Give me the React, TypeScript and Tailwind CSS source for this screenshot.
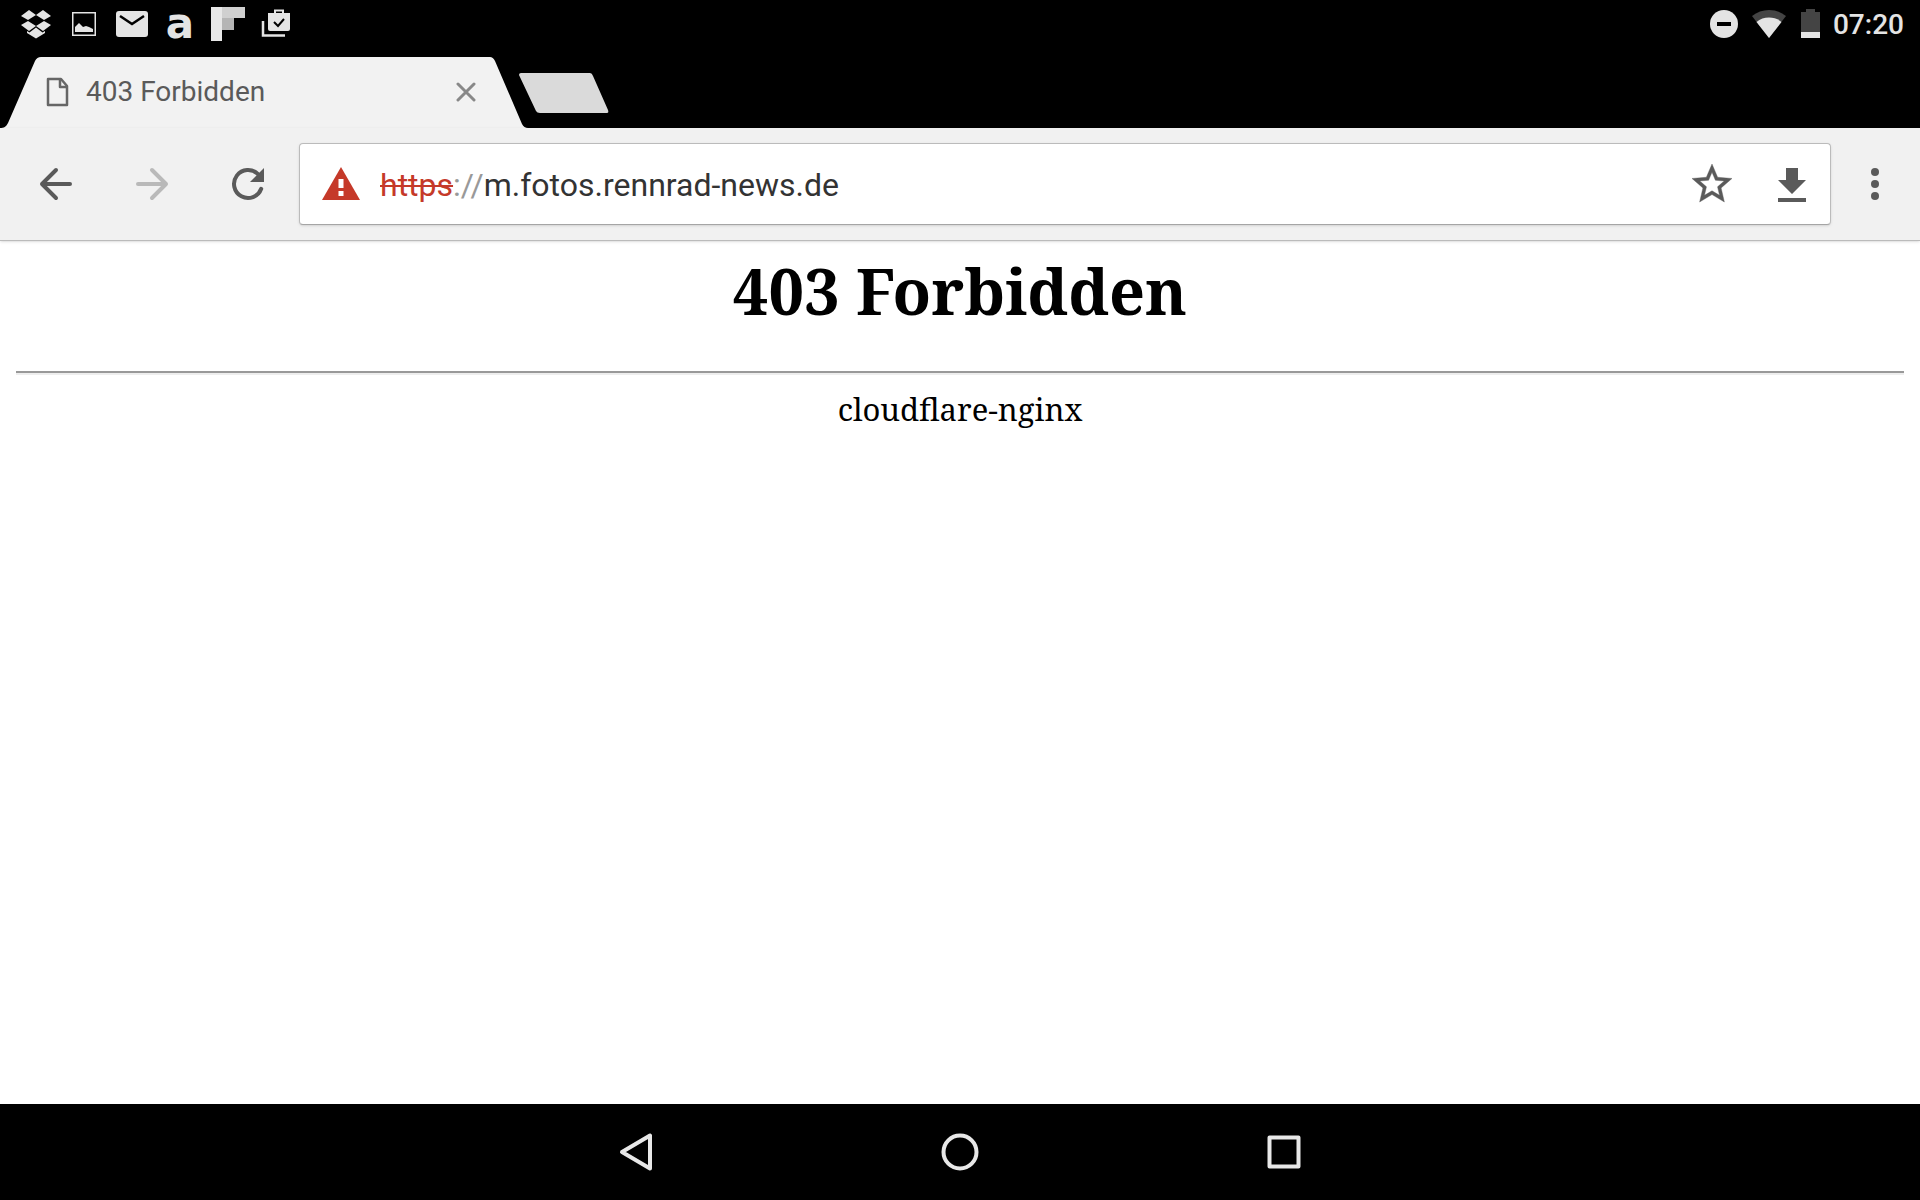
import type { ReactNode } from 'react'

interface IconButtonProps {
  label: string
  className?: string
  disabled?: boolean
  children: ReactNode
}

function IconButton({ label, className = '', disabled, children }: IconButtonProps) {
  return (
    <button
      type="button"
      aria-label={label}
      disabled={disabled}
      className={`flex shrink-0 items-center justify-center ${className}`}
    >
      {children}
    </button>
  )
}

function Notifications() {
  return (
    <div className="flex items-center text-[#e4e4e4]">
      <span className="flex w-12 justify-center">
        <svg className="size-12" viewBox="0 0 48 48" fill="currentColor" aria-hidden="true">
          <path d="M17 10l7 5-8 5-7-4zM31 10l8 6-7 4-8-5zM9 25l7-4 8 5-7 5zM39 25l-7-4-8 5 7 5z" />
          <path d="M24 27.500l-6.500 5-2.500-1.500v2l9 5.500 9-5.500v-2l-2.500 1.500z" />
        </svg>
      </span>
      <span className="flex w-12 justify-center">
        <svg className="size-12" viewBox="0 0 48 48" aria-hidden="true">
          <rect x="12.750" y="12.750" width="22.500" height="22.500" fill="none" stroke="currentColor" strokeWidth="1.500" />
          <path d="M15 32v-5l4-4 4 4 3-1 3 1 4 2v3z" fill="currentColor" />
        </svg>
      </span>
      <span className="flex w-12 justify-center">
        <svg className="size-12" viewBox="0 0 48 48" aria-hidden="true">
          <rect x="8" y="11" width="32" height="26" rx="3" fill="currentColor" />
          <path d="M12 16l12 8 12-8" fill="none" stroke="#000" strokeWidth="2.500" />
        </svg>
      </span>
      <span className="flex h-12 w-12 items-center justify-center font-['DejaVu_Sans'] text-[42px] leading-9 font-bold">
        a
      </span>
      <span className="flex w-12 justify-center">
        <svg className="size-12" viewBox="0 0 48 48" aria-hidden="true">
          <path d="M7 7h11v34H7z" fill="#e8e8e8" />
          <path d="M18 7h23v11H18z" fill="#d0d0d0" />
          <path d="M18 18h12v12H18z" fill="#b5b5b5" />
        </svg>
      </span>
      <span className="flex w-12 justify-center">
        <svg className="size-12" viewBox="0 0 48 48" aria-hidden="true">
          <path d="M11 21v14.500h22" fill="none" stroke="currentColor" strokeWidth="2.500" />
          <path d="M16 13h22v16a2 2 0 0 1-2 2H18a2 2 0 0 1-2-2z" fill="currentColor" />
          <path d="M23 13v-2.500h8V13" fill="none" stroke="currentColor" strokeWidth="2" />
          <path d="M22 22l4 4 6-7" fill="none" stroke="#000" strokeWidth="2" />
        </svg>
      </span>
    </div>
  )
}

function StatusBar() {
  return (
    <header className="flex h-12 items-center justify-between pr-4 pl-3">
      <Notifications />
      <div className="flex items-center text-[#e4e4e4]">
        <svg className="h-12 w-[120px]" viewBox="0 0 120 48" aria-hidden="true">
          <circle cx="15" cy="24" r="14" fill="currentColor" />
          <path d="M8 24h14" stroke="#000" strokeWidth="4" />
          <path d="M43 16a27 27 0 0 1 34 0L60 38z" fill="#444" />
          <path d="M47.500 22a20 20 0 0 1 25 0L60 38z" fill="currentColor" />
          <path d="M92 12h5V9h9v3h5v26H92z" fill="#444" />
          <path d="M92 32h19v6H92z" fill="currentColor" />
        </svg>
        <time className="ml-1 pt-0.5 text-[28px] leading-8 font-medium">07:20</time>
      </div>
    </header>
  )
}

function TabStrip() {
  return (
    <div className="flex h-20 items-end">
      <div className="relative h-[71px] w-[532px] shrink-0">
        <svg className="absolute inset-0 size-full" viewBox="0 0 532 71" aria-hidden="true">
          <path d="M0 71C4 71 6 70 8 66L35 4Q37 0 41 0H490Q493 0 495 4L522 67Q524 71 528 71Z" fill="#f2f2f2" />
        </svg>
        <div className="relative flex h-full items-center pr-14 pb-0.5 pl-[46px]">
          <svg className="h-[30px] w-6 shrink-0" viewBox="0 0 24 30" fill="none" stroke="#666" strokeWidth="2.500" strokeLinejoin="round" aria-hidden="true">
            <path d="M2 2h13l6 7v19H2z" />
            <path d="M14 2v8h7" />
          </svg>
          <span className="ml-4 flex-1 truncate text-[28px] leading-8 text-[#5a5a5a]">403 Forbidden</span>
          <IconButton label="Close tab">
            <svg className="size-5" viewBox="0 0 20 20" fill="none" stroke="#888" strokeWidth="3" strokeLinecap="round" aria-hidden="true">
              <path d="M2 2l16 16M18 2L2 18" />
            </svg>
          </IconButton>
        </div>
      </div>
      <IconButton label="New tab" className="-ml-4 h-[71px]">
        <svg className="h-10 w-24" viewBox="0 0 96 40" aria-hidden="true">
          <path d="M5 0H74Q76 0 77 3L92 37Q93 40 91 40H24Q21 40 20 38L3 2Q3 0 5 0Z" fill="#dadada" />
        </svg>
      </IconButton>
    </div>
  )
}

function AddressBar() {
  return (
    <div className="ml-[3px] flex h-[82px] min-w-0 flex-1 items-center rounded-sm border border-[#bbb] border-b-[#a5a5a5] bg-white pl-[22px] shadow-sm">
      <svg className="h-[34px] w-[38px] shrink-0" viewBox="0 0 38 34" aria-hidden="true">
        <path d="M19 0l19 33H0z" fill="#c53929" />
        <path d="M16.500 12h5v9h-5zM16.500 24h5v5h-5z" fill="#fff" />
      </svg>
      <a href="https://m.fotos.rennrad-news.de" className="ml-5 flex-1 truncate pt-0.5 text-[32px] leading-10 text-[#333]">
        <span className="text-[#c53929] line-through decoration-2">https</span>
        <span className="text-[#999]">://</span>
        m.fotos.rennrad-news.de
      </a>
      <IconButton label="Bookmark this page" className="w-[84px]">
        <svg className="size-12" viewBox="0 0 24 24" fill="#5a5a5a" stroke="#5a5a5a" strokeWidth="0.200" aria-hidden="true">
          <path d="M22 9.240l-7.190-.62L12 2 9.190 8.630 2 9.240l5.460 4.730L5.820 21 12 17.270 18.180 21l-1.630-7.030L22 9.240zM12 15.400l-3.760 2.270 1-4.280-3.320-2.880 4.380-.38L12 6.100l1.710 4.040 4.380.38-3.320 2.880 1 4.280L12 15.400z" />
        </svg>
      </IconButton>
      <IconButton label="Download page" className="w-[76px]">
        <svg className="size-12" viewBox="0 -1 24 24" fill="#5a5a5a" aria-hidden="true">
          <path d="M19 9h-4V3H9v6H5l7 7 7-7zM5 18v2h14v-2H5z" />
        </svg>
      </IconButton>
    </div>
  )
}

function Toolbar() {
  return (
    <nav aria-label="Browser" className="relative flex h-[113px] items-center border-b border-[#bbb] bg-[#f1f1f1] pl-2 shadow-sm">
      <IconButton label="Back" className="w-24">
        <svg className="size-12" viewBox="0 0 24 24" fill="none" stroke="#5a5a5a" strokeWidth="2" strokeLinecap="round" strokeLinejoin="round" aria-hidden="true">
          <path d="M12 5l-7 7 7 7M5 12h14" />
        </svg>
      </IconButton>
      <IconButton label="Forward" className="w-24" disabled>
        <svg className="size-12" viewBox="0 0 24 24" fill="none" stroke="#b9b9b9" strokeWidth="2" strokeLinecap="round" strokeLinejoin="round" aria-hidden="true">
          <path d="M12 5l7 7-7 7M19 12H5" />
        </svg>
      </IconButton>
      <IconButton label="Reload" className="w-24">
        <svg className="size-12" viewBox="0 0 24 24" aria-hidden="true">
          <path d="M17 7.100A7 7 0 1 0 18.600 14.400" fill="none" stroke="#5a5a5a" strokeWidth="2" strokeLinecap="round" />
          <path d="M20 4v7h-7z" fill="#5a5a5a" />
        </svg>
      </IconButton>
      <AddressBar />
      <IconButton label="Menu" className="w-[89px] pr-0.5">
        <svg className="size-12" viewBox="0 0 24 24" fill="#5a5a5a" aria-hidden="true">
          <circle cx="12" cy="6" r="2" />
          <circle cx="12" cy="12" r="2" />
          <circle cx="12" cy="18" r="2" />
        </svg>
      </IconButton>
    </nav>
  )
}

function ErrorPage() {
  return (
    <main className="flex-1 bg-white px-4 pt-4 text-center font-['Noto_Serif','DejaVu_Serif_Condensed','DejaVu_Serif',serif] text-black">
      <h1 className="text-[63px] leading-[68px] font-bold">403 Forbidden</h1>
      <hr className="mt-[46px] border-t-2 border-b-2 border-t-[#999] border-b-[#eee]" />
      <p className="mt-4 text-[31px] leading-9">cloudflare-nginx</p>
    </main>
  )
}

function SystemNav() {
  return (
    <nav aria-label="System" className="flex h-24 items-center justify-center gap-[276px]">
      <IconButton label="Back">
        <svg className="size-12" viewBox="0 0 48 48" fill="none" stroke="#e8e8e8" strokeWidth="4" strokeLinejoin="round" aria-hidden="true">
          <path d="M38 7.500v33L10 24z" />
        </svg>
      </IconButton>
      <IconButton label="Home">
        <svg className="size-12" viewBox="0 0 48 48" fill="none" stroke="#e8e8e8" strokeWidth="4" aria-hidden="true">
          <circle cx="24" cy="24" r="16.500" />
        </svg>
      </IconButton>
      <IconButton label="Recent apps">
        <svg className="size-12" viewBox="0 0 48 48" fill="none" stroke="#e8e8e8" strokeWidth="4" strokeLinejoin="round" aria-hidden="true">
          <rect x="9.500" y="9.500" width="29" height="29" />
        </svg>
      </IconButton>
    </nav>
  )
}

export default function App() {
  return (
    <div className="flex min-h-screen flex-col bg-black font-[Roboto,sans-serif]">
      <StatusBar />
      <TabStrip />
      <Toolbar />
      <ErrorPage />
      <SystemNav />
    </div>
  )
}
